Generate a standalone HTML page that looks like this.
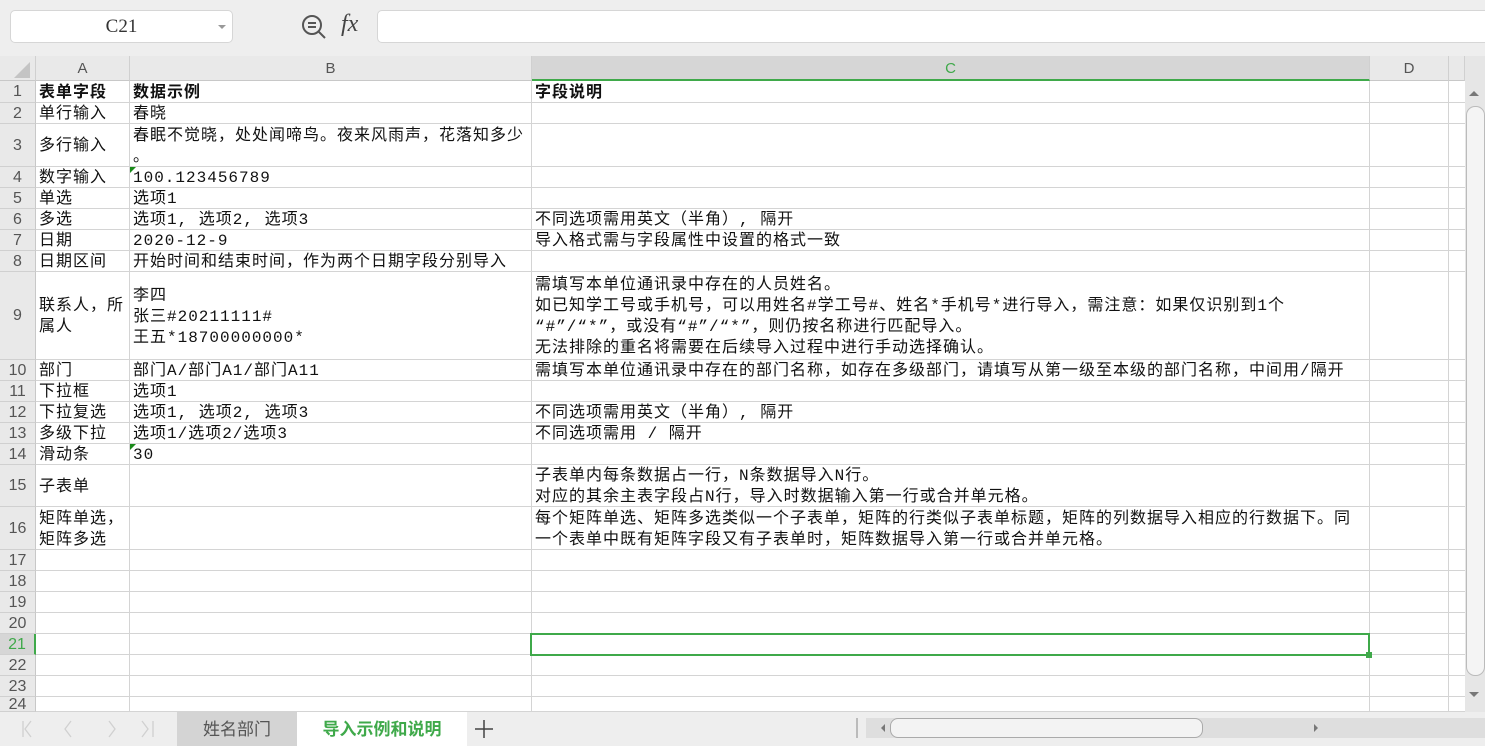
<!DOCTYPE html>
<html><head><meta charset="utf-8"><style>
*{box-sizing:border-box;margin:0;padding:0}
body{width:1485px;height:746px;overflow:hidden;background:#eeeeee;position:relative;font-family:"Liberation Mono","Noto Sans CJK SC",monospace}
.nb{position:absolute;left:10px;top:10px;width:223px;height:33px;background:#fff;border:1px solid #d6d6d6;border-radius:5px;font-family:"Liberation Serif",serif;font-size:19px;color:#333;text-align:center;line-height:31px}
.nb:after{content:"";position:absolute;right:6px;top:14px;border:4px solid transparent;border-top:4px solid #999}
.fx{position:absolute;left:341px;top:11px;font-family:"Liberation Serif",serif;font-style:italic;font-size:24px;color:#444}
.fb{position:absolute;left:377px;top:10px;width:1120px;height:33px;background:#fff;border:1px solid #d6d6d6;border-radius:5px}
.sheet{position:absolute;left:0;top:56px;width:1465px;height:656px;background:#fff;overflow:hidden}
.ch{position:absolute;top:0;height:25px;background:#e9e9e9;border-right:1px solid #d0d0d0;border-bottom:1px solid #c8c8c8;font-family:"Liberation Sans",sans-serif;font-size:15px;color:#555;text-align:center;line-height:25px}
.rh{position:absolute;left:0;width:36px;background:#e9e9e9;border-right:1px solid #c8c8c8;border-bottom:1px solid #d0d0d0;font-family:"Liberation Sans",sans-serif;font-size:16px;color:#555;text-align:center}
.hl{position:absolute;height:1px;background:#d4d4d4;left:36px;width:1429px}
.vl{position:absolute;width:1px;background:#d4d4d4;top:25px;height:640px}
.c{position:absolute;font-size:16px;letter-spacing:1px;color:#111;line-height:21px;white-space:nowrap;display:flex;align-items:center;padding-left:3px;padding-top:2px}
.c b{font-weight:bold}
.tabs{position:absolute;left:0;top:712px;width:1485px;height:34px;background:#eeeeee}
</style></head><body>
<div class="nb">C21</div>
<svg style="position:absolute;left:300px;top:13px" width="28" height="28" viewBox="0 0 28 28"><circle cx="12" cy="12" r="9" fill="none" stroke="#555" stroke-width="2"/><path d="M18.5 18.5L25 25M8 10h8M8 14h8" stroke="#555" stroke-width="2"/></svg>
<div class="fx">fx</div>
<div class="fb"></div>
<div class="sheet">
<div class="ch" style="left:0;width:36px"><svg width="20" height="20" style="position:absolute;left:12px;top:4px"><path d="M18 2V18H2Z" fill="#c4c4c4"/></svg></div>
<div class="ch" style="left:36px;width:94px">A</div>
<div class="ch" style="left:130px;width:402px">B</div>
<div class="ch" style="left:532px;width:838px;background:#d6d6d6;border-bottom:2px solid #3fa94a;color:#3fa94a">C</div>
<div class="ch" style="left:1370px;width:79px">D</div>
<div class="ch" style="left:1449px;width:16px"></div>
</div>
<div id="g"></div>
<div class="tabs">
<svg style="position:absolute;left:15px;top:6px" width="150" height="22"><g fill="none" stroke="#d0d0d0" stroke-width="1.3"><path d="M8 3v16M16 3l-6 8 6 8M56 3l-6 8 6 8M94 3l6 8-6 8M127 3l6 8-6 8M138 3v16"/></g></svg>
<div style="position:absolute;left:177px;top:0;width:120px;height:34px;background:#d4d4d4;font-family:'Noto Sans CJK SC',sans-serif;font-size:17px;color:#555;text-align:center;line-height:32px">姓名部门</div>
<div style="position:absolute;left:297px;top:0;width:170px;height:34px;background:#fff;font-family:'Noto Sans CJK SC',sans-serif;font-weight:bold;font-size:17px;color:#3fa94a;text-align:center;line-height:32px">导入示例和说明</div>
<svg style="position:absolute;left:474px;top:7px" width="20" height="20"><path d="M10 1v18M1 10h18" stroke="#444" stroke-width="1.5"/></svg>
<div style="position:absolute;left:856px;top:6px;width:2px;height:20px;border-left:1px solid #bbb;border-right:1px solid #bbb"></div>
<div style="position:absolute;left:866px;top:6px;width:621px;height:20px;background:#dedede"></div>
<div style="position:absolute;left:877px;top:12px;border:4px solid transparent;border-right:4px solid #777"></div>
<div style="position:absolute;left:890px;top:6px;width:313px;height:20px;background:#f3f3f3;border:1px solid #aaa;border-radius:8px"></div>
<div style="position:absolute;left:1314px;top:12px;border:4px solid transparent;border-left:4px solid #777"></div>
</div>
<div style="position:absolute;left:1465px;top:56px;width:20px;height:656px;background:#e6e6e6"><div style="position:absolute;left:4px;top:30px;border:5px solid transparent;border-bottom:5px solid #777"></div><div style="position:absolute;left:1px;top:50px;width:19px;height:570px;background:#f4f4f4;border:1px solid #bbb;border-radius:9px"></div><div style="position:absolute;left:4px;top:636px;border:5px solid transparent;border-top:5px solid #777"></div></div>
<script>
var rows=[81,103,124,167,188,209,230,251,272,360,381,402,423,444,465,507,550,571,592,613,634,655,676,697,712];
var h='';
for(var i=0;i<rows.length-1;i++){var t=rows[i],b=rows[i+1];
 var sel=i==20;
 h+='<div class="rh" style="top:'+t+'px;height:'+(b-t)+'px;line-height:'+(b-t)+'px;'+(sel?'background:#d6d6d6;color:#3fa94a;border-right:2px solid #3fa94a':'')+'">'+(i+1)+'</div>';
 h+='<div class="hl" style="top:'+(b-1)+'px"></div>';}
[130,532,1370,1449].forEach(function(x){h+='<div class="vl" style="left:'+(x-1)+'px;top:81px;height:631px"></div>'});
var d=[
['<b>表单字段</b>','<b>数据示例</b>','<b>字段说明</b>'],
['单行输入','春晓',''],
['多行输入','春眠不觉晓，处处闻啼鸟。夜来风雨声，花落知多少<br>。',''],
['数字输入','100.123456789',''],
['单选','选项1',''],
['多选','选项1, 选项2, 选项3','不同选项需用英文（半角）, 隔开'],
['日期','2020-12-9','导入格式需与字段属性中设置的格式一致'],
['日期区间','开始时间和结束时间，作为两个日期字段分别导入',''],
['联系人，所<br>属人','李四<br>张三#20211111#<br>王五*18700000000*','需填写本单位通讯录中存在的人员姓名。<br>如已知学工号或手机号，可以用姓名#学工号#、姓名*手机号*进行导入，需注意：如果仅识别到1个<br>“#”/“*”，或没有“#”/“*”，则仍按名称进行匹配导入。<br>无法排除的重名将需要在后续导入过程中进行手动选择确认。'],
['部门','部门A/部门A1/部门A11','需填写本单位通讯录中存在的部门名称，如存在多级部门，请填写从第一级至本级的部门名称，中间用/隔开'],
['下拉框','选项1',''],
['下拉复选','选项1, 选项2, 选项3','不同选项需用英文（半角）, 隔开'],
['多级下拉','选项1/选项2/选项3','不同选项需用 / 隔开'],
['滑动条','30',''],
['子表单','','子表单内每条数据占一行，N条数据导入N行。<br>对应的其余主表字段占N行，导入时数据输入第一行或合并单元格。'],
['矩阵单选，<br>矩阵多选','','每个矩阵单选、矩阵多选类似一个子表单，矩阵的行类似子表单标题，矩阵的列数据导入相应的行数据下。同<br>一个表单中既有矩阵字段又有子表单时，矩阵数据导入第一行或合并单元格。']];
var xs=[36,130,532,1370];
d.forEach(function(r,i){var t=rows[i],b=rows[i+1];
 r.forEach(function(s,j){if(s)h+='<div class="c" style="left:'+xs[j]+'px;top:'+t+'px;width:'+(xs[j+1]-xs[j])+'px;height:'+(b-t)+'px">'+'<div>'+s+'</div></div>'});});
[3,13].forEach(function(i){h+='<div style="position:absolute;left:130px;top:'+rows[i]+'px;border:3px solid transparent;border-left:3px solid #1a8a1a;border-top:3px solid #1a8a1a"></div>'});
h+='<div style="position:absolute;left:530px;top:633px;width:840px;height:23px;border:2px solid #3fa94a"></div><div style="position:absolute;left:1366px;top:652px;width:6px;height:6px;background:#3fa94a"></div>';
document.getElementById('g').innerHTML=h;
</script>
</body></html>
